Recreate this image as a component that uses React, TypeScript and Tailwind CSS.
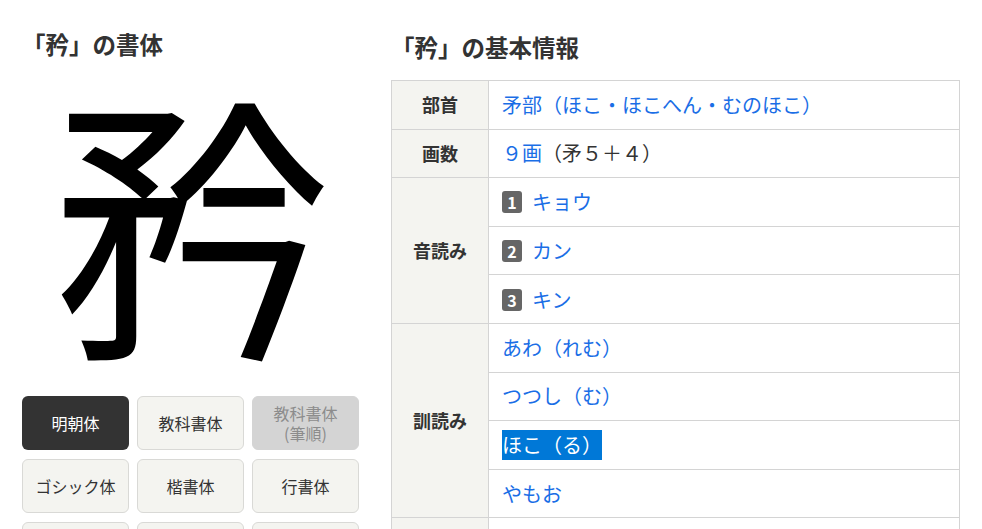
import React from 'react';

const FONT = '"Noto Sans CJK JP", "Noto Sans", sans-serif';

const styles = [
  { label: '明朝体', state: 'active' },
  { label: '教科書体', state: 'normal' },
  { label: '教科書体\n(筆順)', state: 'disabled' },
  { label: 'ゴシック体', state: 'normal' },
  { label: '楷書体', state: 'normal' },
  { label: '行書体', state: 'normal' },
  { label: '草書体', state: 'normal' },
  { label: '隷書体', state: 'normal' },
  { label: '篆書体', state: 'normal' },
];

const onyomi = ['キョウ', 'カン', 'キン'];
const kunyomi = ['あわ（れむ）', 'つつし（む）', 'ほこ（る）', 'やもお'];

function StyleButton({ label, state }: { label: string; state: string }) {
  const base = 'h-[54px] rounded-[6px] flex items-center justify-center text-center text-[16px] leading-[20px] whitespace-pre-line';
  if (state === 'active') return <div className={`${base} bg-[#333333] text-white`}>{label}</div>;
  if (state === 'disabled')
    return <div className={`${base} bg-[#d4d4d4] text-[#8c8c8c] border border-[#d4d4d4]`}>{label}</div>;
  return <div className={`${base} bg-[#f4f4f0] text-[#333333] border border-[#d9d9d6]`}>{label}</div>;
}

function Badge({ n }: { n: number }) {
  return (
    <span className="inline-flex shrink-0 items-center justify-center w-[20px] h-[22px] rounded-[3px] bg-[#666666] text-white text-[16px] font-bold mr-[10px]">
      {n}
    </span>
  );
}

export default function App() {
  const th = 'w-[97px] bg-[#f4f4f0] border border-[#d4d4d4] text-center font-bold text-[18px] text-[#333333]';
  const td = 'h-[48.6px] border border-[#d4d4d4] pl-[13px] text-[20px] leading-[28px] text-[#1a6ee6]';

  return (
    <div className="flex gap-[32px] px-[22px] pt-[28px] bg-white min-h-screen text-[#333333]" style={{ fontFamily: FONT }}>
      {/* left: glyph styles */}
      <div className="w-[337px] shrink-0">
        <h2 className="text-[23.5px] font-bold leading-[33px]">「矜」の書体</h2>
        <div className="h-[335px] flex items-center justify-center pl-[4px] pb-[26px]">
          <span className="text-[280px] leading-none text-black">矜</span>
        </div>
        <div className="grid grid-cols-3 gap-x-[8px] gap-y-[9px]">
          {styles.map(s => (
            <StyleButton key={s.label} label={s.label} state={s.state} />
          ))}
        </div>
      </div>

      {/* right: basic info */}
      <div className="flex-1">
        <h2 className="text-[23.5px] font-bold leading-[33px] mt-[3px]">「矜」の基本情報</h2>
        <table className="w-full border-collapse mt-[16px]">
          <tbody>
            <tr>
              <th className={th}>部首</th>
              <td className={td}>矛部（ほこ・ほこへん・むのほこ）</td>
            </tr>
            <tr>
              <th className={th}>画数</th>
              <td className={td}>
                ９画<span className="text-[#333333]">（矛５＋４）</span>
              </td>
            </tr>
            {onyomi.map((r, i) => (
              <tr key={r}>
                {i === 0 && (
                  <th className={th} rowSpan={onyomi.length}>
                    音読み
                  </th>
                )}
                <td className={td}>
                  <span className="inline-flex items-center">
                    <Badge n={i + 1} />
                    {r}
                  </span>
                </td>
              </tr>
            ))}
            {kunyomi.map((r, i) => (
              <tr key={r}>
                {i === 0 && (
                  <th className={th} rowSpan={kunyomi.length}>
                    訓読み
                  </th>
                )}
                <td className={td}>
                  {r === 'ほこ（る）' ? (
                    <span className="inline-block bg-[#0078d7] text-white leading-[30px]">{r}</span>
                  ) : (
                    r
                  )}
                </td>
              </tr>
            ))}
            <tr>
              <th className={th}>意味</th>
              <td className={`${td} pt-[16px] align-top text-[#333333]`}>あわれむ。ほこる。つつしむ。</td>
            </tr>
          </tbody>
        </table>
      </div>
    </div>
  );
}
